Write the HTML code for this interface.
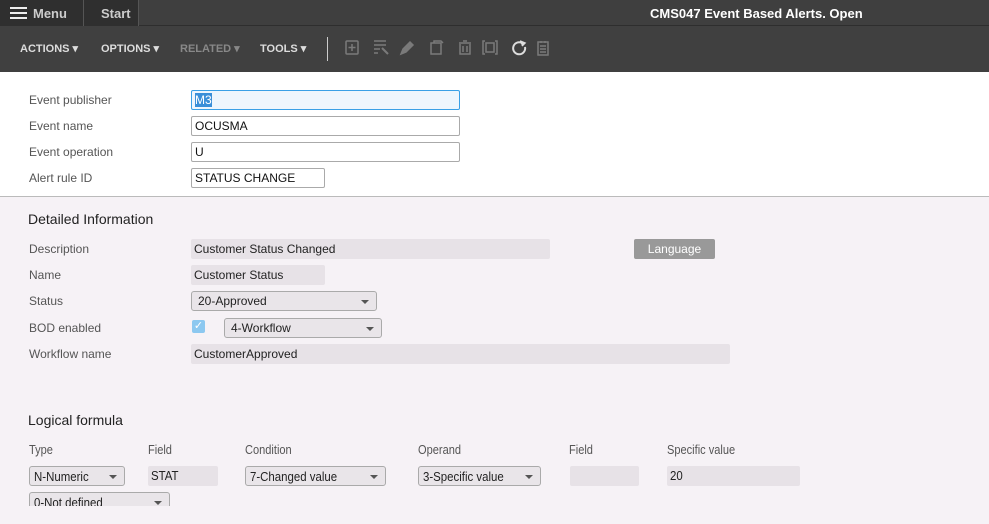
<!DOCTYPE html>
<html><head><meta charset="utf-8"><style>
*{box-sizing:border-box;margin:0;padding:0}
body{width:989px;height:524px;overflow:hidden;font-family:"Liberation Sans",sans-serif;background:#f6f2f6;position:relative}
.a{position:absolute}
.top{left:0;top:0;width:989px;height:26px;background:#3f3f3f;border-bottom:1px solid #2e2e2e}
.tb{left:0;top:26px;width:989px;height:46px;background:#404040}
.white{left:0;top:72px;width:989px;height:125px;background:#fff;border-bottom:1px solid #bbb}
.lbl{font-size:12px;color:#555}
.inp{height:20px;border:1px solid #aaa;border-radius:2px;background:#fff;font-size:12px;color:#111;padding:3px 3px;line-height:13px}
.ro{height:20px;background:#e7e2e7;font-size:12px;color:#222;padding:4px 3px;line-height:13px;border-radius:2px}
.sel{height:20px;border:1px solid #aaa;border-radius:3px;background:#e9e5e9;font-size:12px;color:#222;padding:3px 6px;line-height:13px}
.sel:after{content:"";position:absolute;right:7px;top:8px;border:4px solid transparent;border-top:4px solid #555;border-bottom:0}
.menu{font-size:12px;font-weight:bold;color:#ddd}
.c{font-size:13px;color:#555;transform:scaleX(.85);transform-origin:left;white-space:nowrap}
.cd{display:inline-block;transform:scaleX(.88);transform-origin:left;white-space:nowrap;font-size:13px}
</style></head><body>
<div class="a top"></div>
<div class="a" style="left:0;top:0;width:84px;height:26px;background:#2f2f2f;border-right:1px solid #555"></div>
<div class="a" style="left:10px;top:7px;width:17px;height:2px;background:#eee;box-shadow:0 5px 0 #eee,0 10px 0 #eee"></div>
<div class="a" style="left:33px;top:6px;font-size:13px;font-weight:bold;color:#ccc">Menu</div>
<div class="a" style="left:84px;top:0;width:55px;height:26px;background:#2f2f2f;border-right:1px solid #555"></div>
<div class="a" style="left:101px;top:6px;font-size:13px;font-weight:bold;color:#ccc">Start</div>
<div class="a" style="left:650px;top:6px;font-size:13px;font-weight:bold;color:#fff">CMS047 Event Based Alerts. Open</div>
<div class="a tb"></div>
<div class="a menu" style="left:20px;top:42px;font-size:11px">ACTIONS ▾</div>
<div class="a menu" style="left:101px;top:42px;font-size:11px">OPTIONS ▾</div>
<div class="a menu" style="left:180px;top:42px;font-size:11px;color:#888">RELATED ▾</div>
<div class="a menu" style="left:260px;top:42px;font-size:11px">TOOLS ▾</div>
<div class="a" style="left:327px;top:37px;width:1px;height:24px;background:#ccc"></div>
<svg class="a" style="left:340px;top:38px" width="220" height="20" fill="none" stroke="#7a7a7a" stroke-width="1.5">
<rect x="6" y="3" width="12" height="13" rx="1"/><path d="M12 6v7M8.5 9.5h7"/>
<path d="M34 3h12M34 7h12M34 11h6M34 15h4" /><path d="M42 10l6 6" stroke-width="2"/>
<path d="M61 16l2-5 7-7 3 3-7 7z" fill="#7a7a7a"/>
<rect x="91" y="5" width="10" height="11"/><path d="M94 5V3h7l2 2"/>
<path d="M119 5h12M123 3h4M120 6v10h10V6M123 8v6M127 8v6"/>
<path d="M145 3h-2v13h2M155 3h2v13h-2"/><rect x="146" y="5" width="8" height="9"/>
<path d="M182 5a6 6 0 1 0 3 4" stroke="#ddd" stroke-width="2"/><path d="M180 3l5 2-3 3" fill="#ddd" stroke="#ddd"/>
<rect x="198" y="4" width="10" height="13"/><path d="M200 8h6M200 11h6M200 14h6M201 3v2M205 3v2"/>
</svg>
<div class="a white"></div>
<div class="a lbl" style="left:29px;top:93px">Event publisher</div>
<div class="a inp" style="left:191px;top:90px;width:269px;background:#eef6fd;border-color:#3aa0e6"><span style="background:#3a8fd8;color:#fff">M3</span></div>
<div class="a lbl" style="left:29px;top:119px">Event name</div>
<div class="a inp" style="left:191px;top:116px;width:269px">OCUSMA</div>
<div class="a lbl" style="left:29px;top:145px">Event operation</div>
<div class="a inp" style="left:191px;top:142px;width:269px">U</div>
<div class="a lbl" style="left:29px;top:171px">Alert rule ID</div>
<div class="a inp" style="left:191px;top:168px;width:134px">STATUS CHANGE</div>
<div class="a" style="left:28px;top:211px;font-size:14px;color:#222">Detailed Information</div>
<div class="a lbl" style="left:29px;top:242px">Description</div>
<div class="a ro" style="left:191px;top:239px;width:359px">Customer Status Changed</div>
<div class="a" style="left:634px;top:239px;width:81px;height:20px;background:#999;border-radius:2px;color:#fff;font-size:12px;text-align:center;line-height:20px">Language</div>
<div class="a lbl" style="left:29px;top:268px">Name</div>
<div class="a ro" style="left:191px;top:265px;width:134px">Customer Status</div>
<div class="a lbl" style="left:29px;top:294px">Status</div>
<div class="a sel" style="left:191px;top:291px;width:186px">20-Approved</div>
<div class="a lbl" style="left:29px;top:321px">BOD enabled</div>
<div class="a" style="left:192px;top:320px;width:13px;height:13px;background:#8cc8f0;border-radius:2px;color:#fff;font-size:11px;line-height:13px;text-align:center">✓</div>
<div class="a sel" style="left:224px;top:318px;width:158px">4-Workflow</div>
<div class="a lbl" style="left:29px;top:347px">Workflow name</div>
<div class="a ro" style="left:191px;top:344px;width:539px">CustomerApproved</div>
<div class="a" style="left:28px;top:412px;font-size:14px;color:#222">Logical formula</div>
<div class="a c" style="left:29px;top:442px">Type</div>
<div class="a c" style="left:148px;top:442px">Field</div>
<div class="a c" style="left:245px;top:442px">Condition</div>
<div class="a c" style="left:418px;top:442px">Operand</div>
<div class="a c" style="left:569px;top:442px">Field</div>
<div class="a c" style="left:667px;top:442px">Specific value</div>
<div class="a sel" style="left:29px;top:466px;width:96px;padding-left:4px"><span class="cd">N-Numeric</span></div>
<div class="a ro" style="left:148px;top:466px;width:70px;padding-top:3px"><span class="cd">STAT</span></div>
<div class="a sel" style="left:245px;top:466px;width:141px;padding-left:4px"><span class="cd">7-Changed value</span></div>
<div class="a sel" style="left:418px;top:466px;width:123px;padding-left:4px"><span class="cd">3-Specific value</span></div>
<div class="a ro" style="left:570px;top:466px;width:69px"></div>
<div class="a ro" style="left:667px;top:466px;width:133px;padding-top:3px"><span class="cd">20</span></div>
<div class="a" style="left:29px;top:492px;width:141px;height:14px;overflow:hidden"><div class="a sel" style="left:0;top:0;width:141px;padding-left:4px"><span class="cd">0-Not defined</span></div></div>
</body></html>
